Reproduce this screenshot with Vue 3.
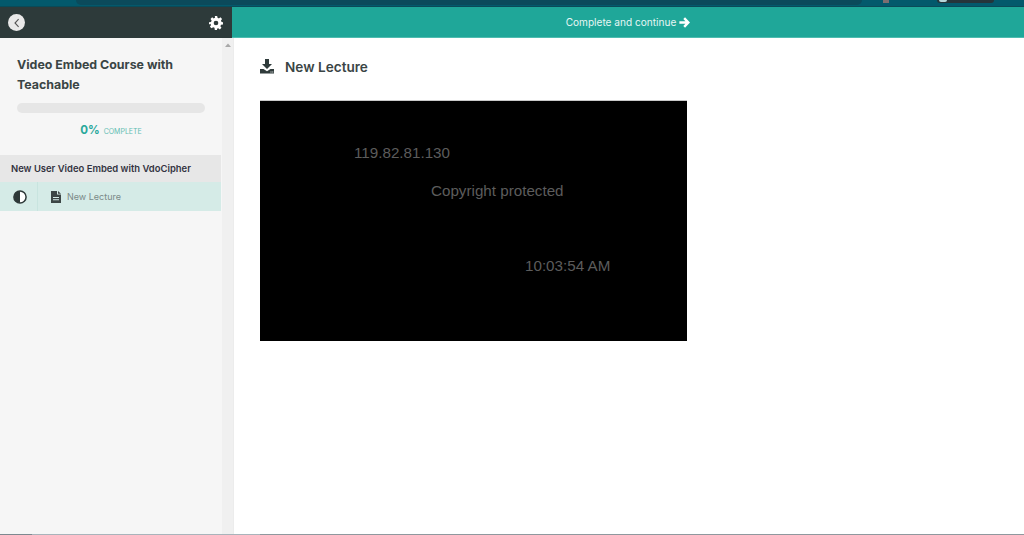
<script setup>
const lectures = [{ id: 1, title: 'New Lecture' }]
const progress = 0
</script>

<template>
  <div class="page">
    <div class="browser-strip">
      <div class="strip-bar"></div>
      <div class="strip-ext"></div>
      <div class="strip-pill"><span class="strip-dot"></span></div>
    </div>

    <div class="topbar">
      <div class="topbar-left">
        <button class="back-btn" aria-label="Back">
          <svg width="8" height="10" viewBox="0 0 8 10"><path d="M5.6 1.2 2 5l3.6 3.8" fill="none" stroke="#555" stroke-width="1.1" /></svg>
        </button>
        <svg class="gear" width="14" height="14" viewBox="0 0 24 24">
          <path fill="#fff" fill-rule="evenodd" d="M10 0h4l.6 3.2c.8.2 1.600.5 2.300 1l2.700-1.900 2.800 2.800-1.900 2.700c.4.700.8 1.500 1 2.300L24 10.700v3.900l-3.500.6c-.2.800-.5 1.500-1 2.200l1.900 2.800-2.800 2.800-2.700-1.900c-.7.400-1.500.7-2.300.9L13.900 24h-3.900l-.6-3.900c-.8-.2-1.600-.5-2.300-.9l-2.700 1.900-2.800-2.800 1.900-2.800c-.4-.7-.8-1.400-1-2.200L0 14.600v-3.900l3.500-.6c.2-.8.5-1.600 1-2.300L2.600 5.100l2.800-2.800 2.700 1.900c.7-.5 1.500-.8 2.300-1L10 0Zm2 8a4 4 0 1 0 0 8 4 4 0 0 0 0-8Z" />
        </svg>
      </div>
      <div class="topbar-right">
        <span>Complete and continue</span>
        <svg width="11" height="11" viewBox="0 0 12 12"><path fill="#fff" d="M6.600.4 12 6l-5.400 5.600-1.900-1.900 2.300-2.300H.4V4.600h6.600L4.700 2.300 6.600.4Z" /></svg>
      </div>
    </div>

    <div class="main">
      <aside class="sidebar">
        <div class="sidebar-inner">
          <div class="course">
            <h1>Video Embed Course with Teachable</h1>
            <div class="bar"><div class="bar-fill" :style="{ width: progress + '%' }"></div></div>
            <div class="percent"><b>{{ progress }}%</b><span>COMPLETE</span></div>
          </div>
          <div class="section-title">New User Video Embed with VdoCipher</div>
          <div v-for="item in lectures" :key="item.id" class="lecture">
            <div class="status">
              <svg width="14" height="14" viewBox="0 0 14 14">
                <circle cx="7" cy="7" r="6.100" fill="#fff" stroke="#2d3838" stroke-width="1.500" />
                <path d="M7 1a6 6 0 0 0 0 12Z" fill="#2d3838" />
              </svg>
            </div>
            <div class="lecture-name">
              <svg width="10" height="12" viewBox="0 0 10 12">
                <path fill="#3c4646" fill-rule="evenodd" d="M0 0h6v3.500h4V12H0V0Zm2 6v1h6V6H2Zm0 2.200v1h6v-1H2ZM7 0l3 2.700H7V0Z" />
              </svg>
              <span>{{ item.title }}</span>
            </div>
          </div>
        </div>
        <div class="scroll-track">
          <svg width="6" height="4" viewBox="0 0 6 4"><path d="M3 0.500 6 4H0Z" fill="#a8a8a8" /></svg>
        </div>
      </aside>

      <main class="content">
        <div class="lecture-head">
          <svg width="14" height="15" viewBox="0 0 14 15">
            <path fill="#2f3b3b" d="M5 0h4v5h3L7 10 2 5h3V0Z" />
            <path fill="#2f3b3b" fill-rule="evenodd" d="M0 10h3.500L7 12.300 10.500 10H14v4.500H0V10Zm10.500 2.400v1h1v-1h-1Zm1.800 0v1h1v-1h-1Z" />
          </svg>
          <h2>New Lecture</h2>
        </div>
        <div class="video">
          <span class="mark mark-ip">119.82.81.130</span>
          <span class="mark mark-copy">Copyright protected</span>
          <span class="mark mark-time">10:03:54 AM</span>
        </div>
      </main>
    </div>
    <div class="bottom-line"></div>
  </div>
</template>

<style>
html,
body {
  margin: 0;
  background: #fff;
}
</style>

<style scoped>
.page {
  width: 1024px;
  height: 535px;
  display: flex;
  flex-direction: column;
  overflow: hidden;
  font-family: Inter, "Liberation Sans", sans-serif;
  color: #2f3b3b;
}

.browser-strip {
  height: 7px;
  flex: none;
  box-sizing: border-box;
  background: #03596c;
  border-bottom: 1px solid #0a4a58;
  display: flex;
  align-items: flex-start;
  padding-left: 76px;
}

.strip-bar {
  width: 786px;
  height: 5px;
  background: #0b4a5b;
  border-radius: 0 0 6px 6px;
}

.strip-ext {
  width: 6px;
  height: 3px;
  margin-left: 21px;
  background: #7d6e70;
}

.strip-pill {
  width: 57px;
  height: 3px;
  margin-left: 48px;
  background: #26353a;
  border-radius: 0 0 6px 6px;
}

.strip-dot {
  display: block;
  width: 8px;
  height: 2px;
  margin-left: 2px;
  background: #b8d6da;
  border-radius: 0 0 4px 4px;
}

.topbar {
  height: 31px;
  flex: none;
  display: flex;
}

.topbar-left {
  width: 232px;
  background: #2d3a3a;
  display: flex;
  align-items: center;
  justify-content: space-between;
  padding: 0 9px 0 8px;
  box-sizing: border-box;
}

.back-btn {
  width: 17px;
  height: 17px;
  padding: 0;
  border: 0;
  border-radius: 50%;
  background: #e9e9e9;
  display: flex;
  align-items: center;
  justify-content: center;
}

.topbar-right {
  flex: 1;
  background: #1fa799;
  border-bottom: 1px solid #4fbcb0;
  box-sizing: border-box;
  color: #e6f6f4;
  font-size: 10.100px;
  display: flex;
  align-items: center;
  justify-content: center;
  gap: 3px;
}

.main {
  flex: 1;
  min-height: 0;
  display: flex;
}

.sidebar {
  width: 234px;
  flex: none;
  display: flex;
  background: #f6f6f6;
  border-right: 1px solid #ececec;
  box-sizing: border-box;
}

.sidebar-inner {
  width: 222px;
  flex: none;
}

.scroll-track {
  flex: 1;
  background: #f0f0f0;
  display: flex;
  justify-content: center;
  padding-top: 5px;
  align-items: flex-start;
}

.course {
  padding: 17px 17px 0;
  height: 117px;
  box-sizing: border-box;
}

.course h1 {
  margin: 0;
  font-size: 12.400px;
  font-weight: 700;
  line-height: 20px;
  color: #3a4545;
}

.bar {
  height: 10px;
  margin-top: 8px;
  border-radius: 5px;
  background: #e6e6e6;
  overflow: hidden;
}

.bar-fill {
  height: 100%;
  background: #1fa799;
}

.percent {
  margin-top: 10px;
  display: flex;
  justify-content: center;
  align-items: baseline;
  gap: 4px;
  color: #2ba89b;
}

.percent b {
  font-size: 11.500px;
  font-weight: 700;
}

.percent span {
  font-size: 7px;
  color: #5fbdb2;
}

.section-title {
  height: 27px;
  line-height: 27px;
  padding-left: 11px;
  margin-right: 1px;
  background: #e7e7e7;
  font-size: 9.450px;
  font-weight: 600;
  color: #33333f;
  white-space: nowrap;
}

.lecture {
  height: 29px;
  margin-right: 1px;
  display: flex;
  background: #d5ebe7;
}

.status {
  width: 38px;
  flex: none;
  padding-left: 2px;
  display: flex;
  align-items: center;
  justify-content: center;
  border-right: 1px solid #c8e4df;
  box-sizing: border-box;
}

.lecture-name {
  display: flex;
  align-items: center;
  gap: 6px;
  padding-left: 13px;
  font-size: 9px;
  color: #7b8a88;
}

.content {
  flex: 1;
  padding: 0 0 0 26px;
  background: #fff;
}

.lecture-head {
  height: 62px;
  padding-bottom: 5px;
  box-sizing: border-box;
  display: flex;
  align-items: center;
  gap: 11px;
}

.lecture-head h2 {
  margin: 0;
  font-size: 13.600px;
  font-weight: 600;
  color: #3a4545;
}

.video {
  position: relative;
  width: 427px;
  height: 241px;
  background: #000;
  border-top: 1px solid #c9c9c9;
  box-sizing: border-box;
  font-family: "Liberation Sans", Arial, sans-serif;
  font-size: 15.200px;
  color: #5c5c5c;
}

.mark {
  position: absolute;
  white-space: nowrap;
  line-height: 18px;
}

.mark-ip {
  left: 94px;
  top: 43px;
}

.mark-copy {
  left: 171px;
  top: 81px;
}

.mark-time {
  left: 265px;
  top: 156px;
}

.bottom-line {
  height: 1px;
  flex: none;
  background: linear-gradient(to right, #7d8990 32px, #a9b4bb 32px, #a9b4bb 260px, #8f989e 260px);
}
</style>
